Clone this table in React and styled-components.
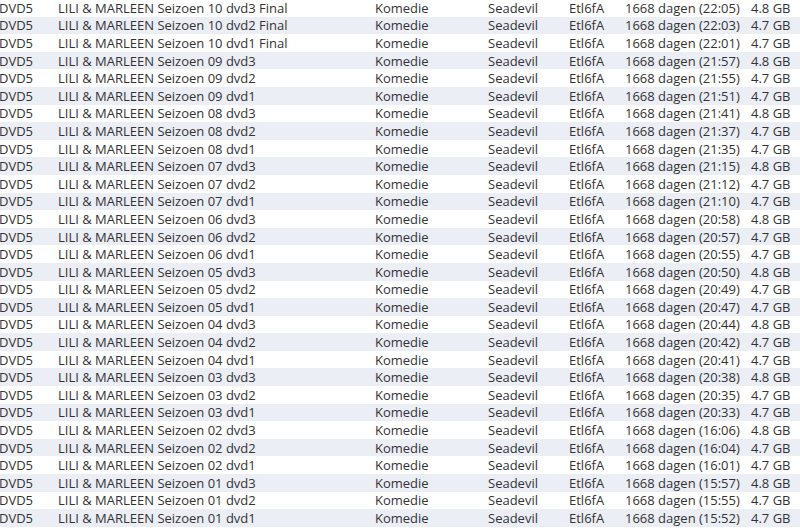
import React from "react";
import styled, { createGlobalStyle } from "styled-components";

const Global = createGlobalStyle`
  html, body { margin: 0; padding: 0; background: #ffffff; overflow: hidden; }
  body { width: 800px; height: 531px; }
`;

const List = styled.div`
  margin: -1px 0 0 -1px;
  width: 801px;
  font-family: "Segoe UI", "Open Sans", "Noto Sans", sans-serif;
  font-size: 13px;
  color: #333333;
`;

const Row = styled.div`
  display: grid;
  grid-template-columns: 59px 317px 113px 81px 56px 126px 49px;
  height: 17.6px;
  align-items: center;
  background: ${(p) => (p.$alt ? "#eceef6" : "#ffffff")};
  white-space: nowrap;
`;

const Cell = styled.div`
  line-height: 16px;
`;

const rows = [
  ["10", "3", " Final", "22:05", "4.8"],
  ["10", "2", " Final", "22:03", "4.7"],
  ["10", "1", " Final", "22:01", "4.7"],
  ["09", "3", "", "21:57", "4.8"],
  ["09", "2", "", "21:55", "4.7"],
  ["09", "1", "", "21:51", "4.7"],
  ["08", "3", "", "21:41", "4.8"],
  ["08", "2", "", "21:37", "4.7"],
  ["08", "1", "", "21:35", "4.7"],
  ["07", "3", "", "21:15", "4.8"],
  ["07", "2", "", "21:12", "4.7"],
  ["07", "1", "", "21:10", "4.7"],
  ["06", "3", "", "20:58", "4.8"],
  ["06", "2", "", "20:57", "4.7"],
  ["06", "1", "", "20:55", "4.7"],
  ["05", "3", "", "20:50", "4.8"],
  ["05", "2", "", "20:49", "4.7"],
  ["05", "1", "", "20:47", "4.7"],
  ["04", "3", "", "20:44", "4.8"],
  ["04", "2", "", "20:42", "4.7"],
  ["04", "1", "", "20:41", "4.7"],
  ["03", "3", "", "20:38", "4.8"],
  ["03", "2", "", "20:35", "4.7"],
  ["03", "1", "", "20:33", "4.7"],
  ["02", "3", "", "16:06", "4.8"],
  ["02", "2", "", "16:04", "4.7"],
  ["02", "1", "", "16:01", "4.7"],
  ["01", "3", "", "15:57", "4.8"],
  ["01", "2", "", "15:55", "4.7"],
  ["01", "1", "", "15:52", "4.7"],
];

export default function App() {
  return (
    <>
      <Global />
      <List>
        {rows.map(([s, d, extra, t, gb], i) => (
          <Row key={i} $alt={i % 2 === 1}>
            <Cell>DVD5</Cell>
            <Cell>{`LILI & MARLEEN Seizoen ${s} dvd${d}${extra}`}</Cell>
            <Cell>Komedie</Cell>
            <Cell>Seadevil</Cell>
            <Cell>Etl6fA</Cell>
            <Cell>{`1668 dagen (${t})`}</Cell>
            <Cell>{`${gb} GB`}</Cell>
          </Row>
        ))}
      </List>
    </>
  );
}
